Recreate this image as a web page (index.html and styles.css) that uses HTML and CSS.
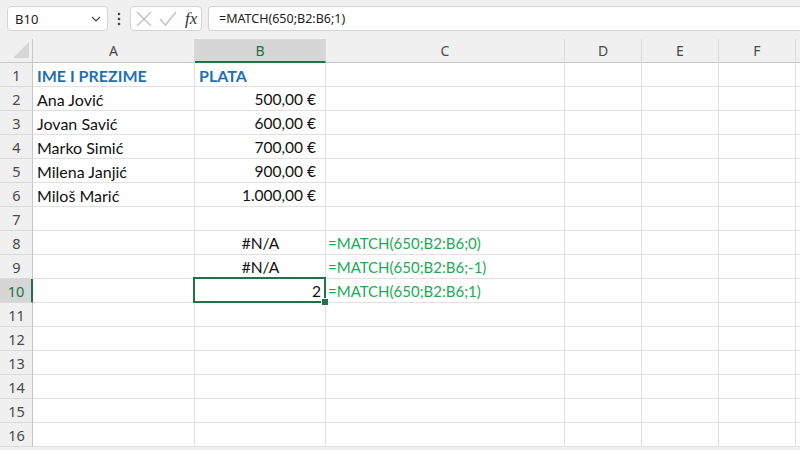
FILE: index.html
```html
<!DOCTYPE html>
<html>
<head>
<meta charset="utf-8">
<link rel="stylesheet" href="styles.css">
</head>
<body>
<div class="app">
  <div class="toolbar">
    <div class="namebox">
      <span class="nb-text">B10</span>
      <svg class="chev" width="10" height="6" viewBox="0 0 10 6"><polyline points="1,1 5,5 9,1" fill="none" stroke="#444" stroke-width="1.2"/></svg>
    </div>
    <div class="dots">
      <svg width="4" height="14" viewBox="0 0 4 14"><circle cx="2" cy="2" r="1.3" fill="#444"/><circle cx="2" cy="7" r="1.3" fill="#444"/><circle cx="2" cy="12" r="1.3" fill="#444"/></svg>
    </div>
    <div class="fxbox">
      <svg class="ico" width="16" height="16" viewBox="0 0 16 16"><path d="M1 1 L15 15 M15 1 L1 15" stroke="#bdbdbd" stroke-width="1.2" fill="none"/></svg>
      <svg class="ico" width="18" height="16" viewBox="0 0 18 16"><polyline points="1,8 6.5,14 17,1" stroke="#bdbdbd" stroke-width="1.2" fill="none"/></svg>
      <span class="fx">fx</span>
    </div>
    <div class="formula">=MATCH(650;B2:B6;1)</div>
  </div>

  <div class="sheet">
    <div class="corner"><span class="tri"></span></div>
    <div class="ch">A</div><div class="ch sel">B</div><div class="ch">C</div><div class="ch">D</div><div class="ch">E</div><div class="ch">F</div><div class="ch"></div>

    <div class="rh">1</div><div class="c head">IME I PREZIME</div><div class="c head">PLATA</div><div class="c"></div><div class="c"></div><div class="c"></div><div class="c"></div><div class="c"></div>
    <div class="rh">2</div><div class="c txt">Ana Jović</div><div class="c num">500,00 €</div><div class="c"></div><div class="c"></div><div class="c"></div><div class="c"></div><div class="c"></div>
    <div class="rh">3</div><div class="c txt">Jovan Savić</div><div class="c num">600,00 €</div><div class="c"></div><div class="c"></div><div class="c"></div><div class="c"></div><div class="c"></div>
    <div class="rh">4</div><div class="c txt">Marko Simić</div><div class="c num">700,00 €</div><div class="c"></div><div class="c"></div><div class="c"></div><div class="c"></div><div class="c"></div>
    <div class="rh">5</div><div class="c txt">Milena Janjić</div><div class="c num">900,00 €</div><div class="c"></div><div class="c"></div><div class="c"></div><div class="c"></div><div class="c"></div>
    <div class="rh">6</div><div class="c txt">Miloš Marić</div><div class="c num">1.000,00 €</div><div class="c"></div><div class="c"></div><div class="c"></div><div class="c"></div><div class="c"></div>
    <div class="rh">7</div><div class="c"></div><div class="c"></div><div class="c"></div><div class="c"></div><div class="c"></div><div class="c"></div><div class="c"></div>
    <div class="rh">8</div><div class="c"></div><div class="c err">#N/A</div><div class="c green">=MATCH(650;B2:B6;0)</div><div class="c"></div><div class="c"></div><div class="c"></div><div class="c"></div>
    <div class="rh">9</div><div class="c"></div><div class="c err">#N/A</div><div class="c green">=MATCH(650;B2:B6;-1)</div><div class="c"></div><div class="c"></div><div class="c"></div><div class="c"></div>
    <div class="rh sel">10</div><div class="c"></div><div class="c val active">2<span class="handle"></span></div><div class="c green">=MATCH(650;B2:B6;1)</div><div class="c"></div><div class="c"></div><div class="c"></div><div class="c"></div>
    <div class="rh">11</div><div class="c"></div><div class="c"></div><div class="c"></div><div class="c"></div><div class="c"></div><div class="c"></div><div class="c"></div>
    <div class="rh">12</div><div class="c"></div><div class="c"></div><div class="c"></div><div class="c"></div><div class="c"></div><div class="c"></div><div class="c"></div>
    <div class="rh">13</div><div class="c"></div><div class="c"></div><div class="c"></div><div class="c"></div><div class="c"></div><div class="c"></div><div class="c"></div>
    <div class="rh">14</div><div class="c"></div><div class="c"></div><div class="c"></div><div class="c"></div><div class="c"></div><div class="c"></div><div class="c"></div>
    <div class="rh">15</div><div class="c"></div><div class="c"></div><div class="c"></div><div class="c"></div><div class="c"></div><div class="c"></div><div class="c"></div>
    <div class="rh">16</div><div class="c"></div><div class="c"></div><div class="c"></div><div class="c"></div><div class="c"></div><div class="c"></div><div class="c"></div>
  </div>
</div>
</body>
</html>
```

FILE: styles.css
```css
html, body {
  margin: 0;
  padding: 0;
  background: #ffffff;
}
.app {
  width: 800px;
  height: 450px;
  overflow: hidden;
  background: #f0f0f0;
}
.toolbar {
  height: 39px;
  box-sizing: border-box;
  padding-top: 6px;
  display: flex;
  align-items: flex-start;
  font-family: "Noto Sans", "Open Sans", sans-serif;
}
.namebox {
  margin-left: 7px;
  width: 101px;
  height: 25px;
  box-sizing: border-box;
  background: #fff;
  border: 1px solid #d4d4d4;
  border-radius: 4px;
  display: flex;
  align-items: center;
  justify-content: space-between;
  padding: 0 6px 0 7px;
}
.nb-text {
  font-size: 13px;
  color: #222;
}
.chev { display: block; }
.dots {
  width: 22px;
  height: 25px;
  display: flex;
  align-items: center;
  justify-content: center;
}
.dots svg { display: block; }
.fxbox {
  width: 72px;
  height: 25px;
  box-sizing: border-box;
  background: #fff;
  border: 1px solid #d4d4d4;
  border-radius: 4px;
  display: flex;
  align-items: center;
  padding-left: 5px;
  gap: 7px;
}
.ico { display: block; }
.fx {
  font-family: "Liberation Serif", "DejaVu Serif", serif;
  font-style: italic;
  font-size: 17px;
  color: #333;
  margin-left: 1px;
  line-height: 1;
}
.formula {
  margin-left: 6px;
  flex: 1;
  height: 25px;
  box-sizing: border-box;
  background: #fff;
  border: 1px solid #d4d4d4;
  border-right: none;
  border-radius: 4px 0 0 4px;
  font-size: 12.5px;
  color: #222;
  padding-left: 10px;
  line-height: 23px;
}
.sheet {
  display: grid;
  grid-template-columns: 33px 162px 131px 239px 77px 77px 77px 1fr;
  grid-auto-rows: 24px;
  background: #fff;
}
.corner {
  background: #f0f0f0;
  border-right: 1px solid #c9c9c9;
  border-bottom: 1px solid #c9c9c9;
  box-sizing: border-box;
  position: relative;
}
.tri {
  position: absolute;
  right: 3px;
  bottom: 4px;
  width: 0;
  height: 0;
  border-left: 16px solid transparent;
  border-bottom: 16px solid #d6d6d6;
}
.ch {
  background: #f0f0f0;
  border-right: 1px solid #dadada;
  border-bottom: 1px solid #c6c6c6;
  box-sizing: border-box;
  font-family: "Noto Sans", "Open Sans", sans-serif;
  font-size: 14px;
  color: #4a4a4a;
  display: flex;
  align-items: center;
  justify-content: center;
}
.ch.sel {
  background: #d6d6d6;
  color: #217346;
  border-bottom: 2px solid #217346;
}
.rh {
  background: #f0f0f0;
  border-right: 1px solid #c6c6c6;
  border-bottom: 1px solid #dadada;
  box-sizing: border-box;
  font-family: "Noto Sans", "Open Sans", sans-serif;
  font-size: 14.5px;
  color: #4a4a4a;
  display: flex;
  align-items: center;
  justify-content: center;
  padding-left: 1px;
}
.rh.sel {
  background: #d6d6d6;
  color: #217346;
  border-right: 2px solid #217346;
}
.c {
  border-right: 1px solid #e1e1e1;
  border-bottom: 1px solid #e1e1e1;
  box-sizing: border-box;
  font-family: Lato, "Open Sans", sans-serif;
  font-size: 15.5px;
  color: #111;
  display: flex;
  align-items: center;
  padding: 1px 3px 0 4px;
  white-space: nowrap;
  overflow: visible;
}
.c.txt,
.c.head {
  font-size: 16px;
}
.c.head {
  color: #1f6fb6;
  font-weight: 700;
}
.c.num {
  justify-content: flex-end;
  padding-right: 9px;
}
.c.err {
  justify-content: center;
}
.c.val {
  justify-content: flex-end;
  padding-right: 4px;
}
.c.green {
  color: #1aab55;
  padding-left: 2px;
  font-size: 15px;
}
.c.active {
  position: relative;
}
.c.active::after {
  content: "";
  position: absolute;
  left: -2px;
  top: -2px;
  right: -1px;
  bottom: -1px;
  border: 2px solid #217346;
  pointer-events: none;
}
.handle {
  position: absolute;
  right: -4px;
  bottom: -4px;
  width: 6px;
  height: 6px;
  background: #217346;
  border: 1px solid #fff;
  z-index: 2;
}
```
